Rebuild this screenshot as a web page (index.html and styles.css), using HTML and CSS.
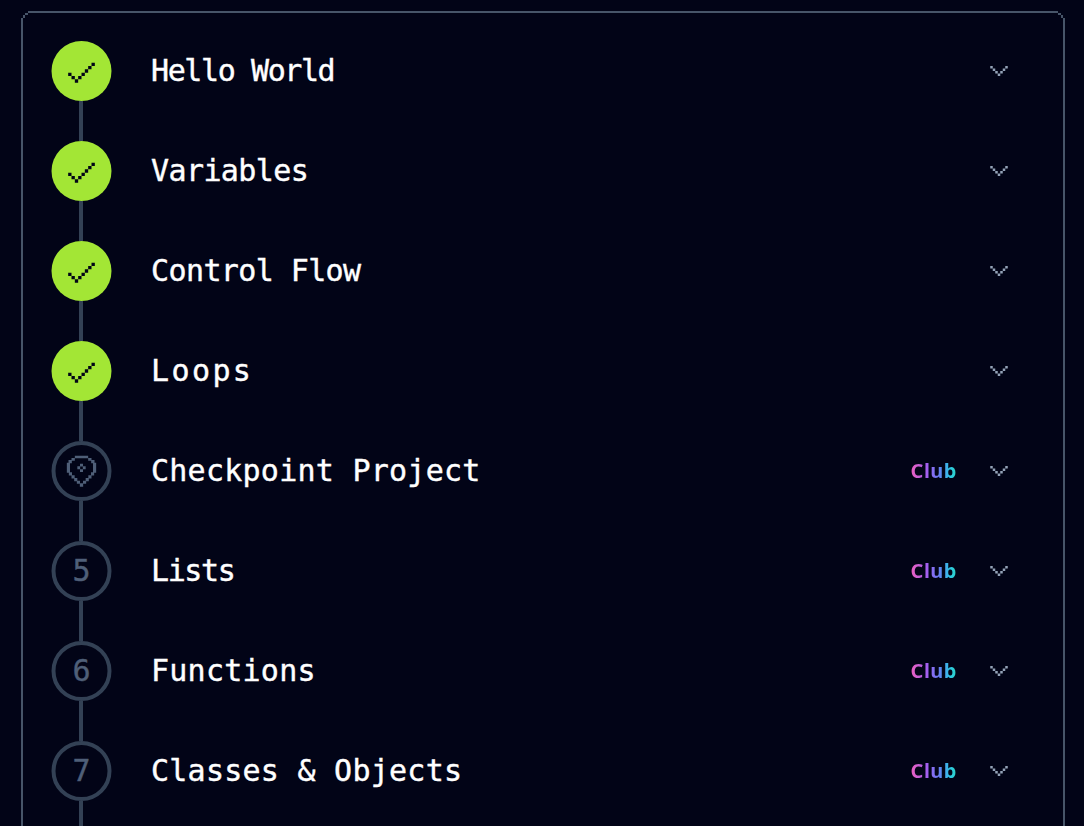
FILE: index.html
```html
<!DOCTYPE html>
<html lang="en">
<head>
<meta charset="utf-8">
<title>Course path</title>
<link rel="stylesheet" href="styles.css">
</head>
<body>
<svg class="defs" width="0" height="0" aria-hidden="true">
  <symbol id="chev" viewBox="0 0 24 24">
    <path d="M5 8h2v2H5zM7 10h2v2H7zM9 12h2v2H9zM11 14h2v2h-2zM13 12h2v2h-2zM15 10h2v2h-2zM17 8h2v2h-2z"/>
  </symbol>
  <symbol id="check" viewBox="0 0 24 24">
    <path d="M18 7h2v2h-2zM16 9h2v2h-2zM14 11h2v2h-2zM12 13h2v2h-2zM10 15h2v2h-2zM8 17h2v2H8zM6 15h2v2H6zM4 13h2v2H4z"/>
  </symbol>
  <symbol id="corner" viewBox="0 0 7 7">
    <path class="corner-bg" d="M0 0h7v2H4v2H2v3H0z"/>
    <path class="corner-line" d="M4 2h3v2H4zM2 4h2v3H2z"/>
  </symbol>
</svg>
<main class="card">
  <svg class="corner tl"><use href="#corner"/></svg>
  <svg class="corner tr"><use href="#corner"/></svg>

  <section class="step">
    <div class="rail"><div class="node done"><svg class="ico"><use href="#check"/></svg></div><div class="line"></div></div>
    <div class="body"><h2 class="title ls-tight">Hello World</h2><svg class="chev"><use href="#chev"/></svg></div>
  </section>
  <section class="step">
    <div class="rail"><div class="node done"><svg class="ico"><use href="#check"/></svg></div><div class="line"></div></div>
    <div class="body"><h2 class="title ls-snug">Variables</h2><svg class="chev"><use href="#chev"/></svg></div>
  </section>
  <section class="step">
    <div class="rail"><div class="node done"><svg class="ico"><use href="#check"/></svg></div><div class="line"></div></div>
    <div class="body"><h2 class="title ls-snug">Control Flow</h2><svg class="chev"><use href="#chev"/></svg></div>
  </section>
  <section class="step">
    <div class="rail"><div class="node done"><svg class="ico"><use href="#check"/></svg></div><div class="line"></div></div>
    <div class="body"><h2 class="title ls-wide">Loops</h2><svg class="chev"><use href="#chev"/></svg></div>
  </section>
  <section class="step">
    <div class="rail"><div class="node todo">
      <svg class="ico shield" viewBox="0 0 24 24"><path d="M8 2.800h8v1.600H8zM6 4.200h2v1.600H6zM16 4.200h2v1.600h-2zM4.200 5.400h2v2H4.200zM17.800 5.400h2v2h-2zM3.200 7h1.900v6H3.200zM18.900 7h1.900v6h-1.900zM4.400 12.800h1.900v1.900H4.400zM17.700 12.800h1.900v1.900h-1.900zM6 14.600h1.900v1.900H6zM16.100 14.600H18v1.900h-1.900zM7.600 16.200h1.900v1.900H7.600zM14.500 16.200h1.900v1.900h-1.900zM9.200 17.800h1.900v1.900H9.200zM12.900 17.800h1.900v1.900h-1.900zM11 19.400h2v2h-2zM11.100 7.600h1.800v1.700h-1.800zM9.500 9.200h1.700v1.800H9.500zM12.800 9.200h1.700v1.800h-1.700zM11.100 10.900h1.800v1.700h-1.800z"/></svg>
    </div><div class="line"></div></div>
    <div class="body"><h2 class="title ls-loose">Checkpoint Project</h2><span class="club">Club</span><svg class="chev"><use href="#chev"/></svg></div>
  </section>
  <section class="step">
    <div class="rail"><div class="node todo"><span class="num">5</span></div><div class="line"></div></div>
    <div class="body"><h2 class="title ls-tight">Lists</h2><span class="club">Club</span><svg class="chev"><use href="#chev"/></svg></div>
  </section>
  <section class="step">
    <div class="rail"><div class="node todo"><span class="num">6</span></div><div class="line"></div></div>
    <div class="body"><h2 class="title ls-loose">Functions</h2><span class="club">Club</span><svg class="chev"><use href="#chev"/></svg></div>
  </section>
  <section class="step">
    <div class="rail"><div class="node todo"><span class="num">7</span></div><div class="line"></div></div>
    <div class="body"><h2 class="title ls-loose">Classes &amp; Objects</h2><span class="club">Club</span><svg class="chev"><use href="#chev"/></svg></div>
  </section>
</main>
</body>
</html>
```
FILE: styles.css
```css
* { box-sizing: border-box; }

html, body {
  margin: 0;
  height: 826px;
  overflow: hidden;
  background: #020417;
}

body {
  padding: 11px 19px 0 21px;
  font-family: "DejaVu Sans Mono", monospace;
}

.defs { position: absolute; }

.card {
  position: relative;
  border: 2px solid #475569;
  padding: 28px 49px 0 28px;
  height: 900px;
}

.corner {
  position: absolute;
  top: -2px;
  width: 7px;
  height: 7px;
}
.corner.tl { left: -2px; }
.corner.tr { right: -2px; transform: scaleX(-1); }
.corner-bg { fill: #020417; }
.corner-line { fill: #475569; }

.step {
  display: flex;
  gap: 40px;
  height: 100px;
}

.rail {
  width: 60px;
  display: flex;
  flex-direction: column;
  align-items: center;
  flex: none;
}

.node {
  width: 60px;
  height: 60px;
  flex: none;
  border-radius: 50%;
  display: flex;
  align-items: center;
  justify-content: center;
  transform: translateX(0.5px);
}
.node.done { background: #a3e635; color: #020617; }
.node.todo { border: 4px solid #334155; color: #4f5f78; }

.line {
  width: 4px;
  height: 40px;
  background: #334155;
}

.ico {
  width: 40px;
  height: 40px;
  fill: currentColor;
  flex: none;
}

.num {
  font-size: 30px;
  line-height: 1;
  -webkit-text-stroke: 0.4px currentColor;
}

.body {
  flex: 1;
  height: 60px;
  display: flex;
  align-items: center;
}

.title {
  margin: -2px auto 0 0;
  color: #fff;
  font-size: 30px;
  font-weight: 400;
  -webkit-text-stroke: 0.4px #fff;
  white-space: pre;
}
.ls-tight { letter-spacing: -1.4px; }
.ls-snug { letter-spacing: -0.6px; }
.ls-loose { letter-spacing: 0.25px; }
.ls-wide { letter-spacing: 2.4px; }

.club {
  font-family: "Noto Sans", sans-serif;
  font-size: 20px;
  font-weight: 700;
  letter-spacing: 0.5px;
  background: linear-gradient(90deg, #ec5fc0 0%, #a35ff0 35%, #6a7cf5 60%, #2cc8e6 85%, #2dd4bf 100%);
  -webkit-background-clip: text;
  background-clip: text;
  color: transparent;
  margin: -2px 27px 0 0;
}

.chev {
  width: 30px;
  height: 30px;
  fill: #94a3b8;
  flex: none;
}
```
